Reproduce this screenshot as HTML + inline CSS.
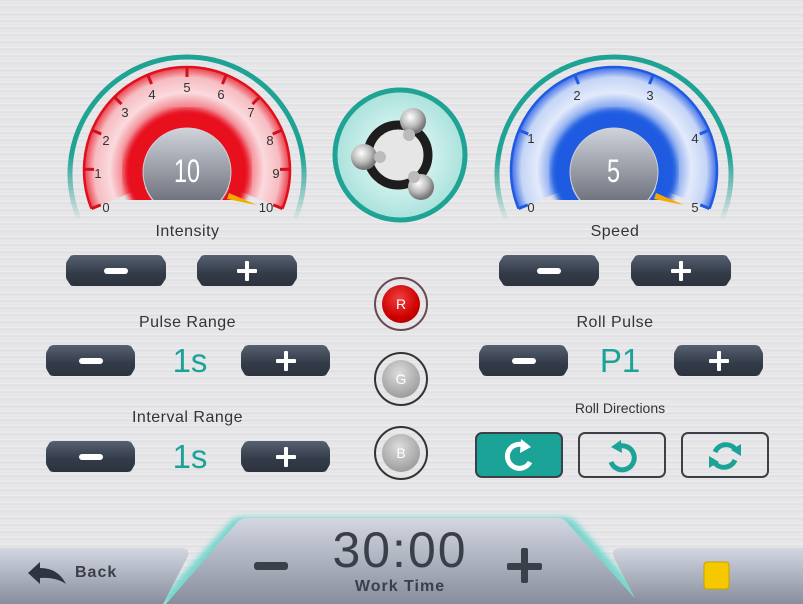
<!DOCTYPE html>
<html><head><meta charset="utf-8">
<style>
*{margin:0;padding:0;box-sizing:border-box}
body{width:803px;height:604px;overflow:hidden;position:relative;font-family:"Liberation Sans",sans-serif;
background:repeating-linear-gradient(180deg,#e9e9eb 0px,#dcdcde 1px,#ececee 2px,#e2e2e4 4px,#f0f0f2 5px,#dedee0 7px);}
.btn{position:absolute;height:31px;border-radius:8px/10px;background:linear-gradient(#566070,#333b48 60%,#2c333e);
box-shadow:0 1px 2px rgba(0,0,0,.4);clip-path:polygon(0 25%,5% 0,95% 0,100% 25%,100% 75%,95% 100%,5% 100%,0 75%);}
.btn .m{position:absolute;left:50%;top:50%;width:24px;height:6px;margin:-3px 0 0 -12px;background:#fff;border-radius:3px}
.btn .p1{position:absolute;left:50%;top:50%;width:20px;height:4px;margin:-2px 0 0 -10px;background:#fff;border-radius:1px}
.btn .p2{position:absolute;left:50%;top:50%;width:4px;height:20px;margin:-10px 0 0 -2px;background:#fff;border-radius:1px}
.lbl{position:absolute;color:#333;font-size:16px;letter-spacing:.5px;text-align:center}
.val{position:absolute;color:#1aa396;font-size:33px;text-align:center}
.rgb{position:absolute;width:54px;height:54px;border-radius:50%;border:2px solid #4a3f44;}
.rgb div{position:absolute;left:6px;top:6px;width:38px;height:38px;border-radius:50%;color:#fff;font-size:14px;text-align:center;line-height:38px}
.dir{position:absolute;top:432px;width:88px;height:46px;border:2px solid #3c4048;border-radius:7px}
</style></head><body>

<svg width="803" height="604" style="position:absolute;left:0;top:0">
<defs>
<radialGradient id="rg" cx="187" cy="170" r="103" gradientUnits="userSpaceOnUse">
<stop offset="0.5" stop-color="#e8101c"/><stop offset="0.6" stop-color="#f27a84"/><stop offset="0.75" stop-color="#fadadd"/><stop offset="0.9" stop-color="#f6bcc1"/><stop offset="1" stop-color="#ea3a48"/></radialGradient>
<radialGradient id="bg" cx="614" cy="170" r="103" gradientUnits="userSpaceOnUse">
<stop offset="0.5" stop-color="#1e5be0"/><stop offset="0.6" stop-color="#7da0ee"/><stop offset="0.75" stop-color="#e3eafb"/><stop offset="0.9" stop-color="#c5d5f6"/><stop offset="1" stop-color="#3a6ae8"/></radialGradient>
<linearGradient id="tl" x1="0" y1="57" x2="0" y2="225" gradientUnits="userSpaceOnUse"><stop offset="0.6" stop-color="#1fa394"/><stop offset="1" stop-color="#1fa394" stop-opacity="0"/></linearGradient>
<linearGradient id="hub" x1="0" y1="0" x2="0" y2="1"><stop offset="0" stop-color="#d0d3da"/><stop offset="1" stop-color="#5a606c"/></linearGradient>
<radialGradient id="logo" cx="0.5" cy="0.5" r="0.5"><stop offset="0.3" stop-color="#dff5f3"/><stop offset="1" stop-color="#a9e2dc"/></radialGradient>
<radialGradient id="ball" cx="0.4" cy="0.35" r="0.6"><stop offset="0" stop-color="#fff"/><stop offset="0.6" stop-color="#bbb"/><stop offset="1" stop-color="#777"/></radialGradient>
<linearGradient id="bot" x1="0" y1="0" x2="0" y2="1"><stop offset="0" stop-color="#d3d7e2"/><stop offset="1" stop-color="#878d9c"/></linearGradient>
<filter id="bl"><feGaussianBlur stdDeviation="3"/></filter>
<clipPath id="c1"><rect x="0" y="0" width="803" height="200"/></clipPath>
</defs>

<!-- left gauge -->
<path d="M79,222 A117 117 0 1 1 295,222" fill="none" stroke="url(#tl)" stroke-width="5" transform="translate(0,-3)"/>
<path d="M187,170 L91.5,208.6 A103 103 0 1 1 282.5,208.6 Z" fill="url(#rg)"/>
<path d="M91.5,208.6 A103 103 0 1 1 282.5,208.6" fill="none" stroke="#e0101c" stroke-width="2.5"/>
<g stroke="#d0101c" stroke-width="3">
<line x1="187" y1="77" x2="187" y2="67" transform="rotate(-112 187 170)"/><line x1="187" y1="77" x2="187" y2="67" transform="rotate(-89.6 187 170)"/><line x1="187" y1="77" x2="187" y2="67" transform="rotate(-67.2 187 170)"/><line x1="187" y1="77" x2="187" y2="67" transform="rotate(-44.8 187 170)"/><line x1="187" y1="77" x2="187" y2="67" transform="rotate(-22.4 187 170)"/><line x1="187" y1="77" x2="187" y2="67"/><line x1="187" y1="77" x2="187" y2="67" transform="rotate(22.4 187 170)"/><line x1="187" y1="77" x2="187" y2="67" transform="rotate(44.8 187 170)"/><line x1="187" y1="77" x2="187" y2="67" transform="rotate(67.2 187 170)"/><line x1="187" y1="77" x2="187" y2="67" transform="rotate(89.6 187 170)"/><line x1="187" y1="77" x2="187" y2="67" transform="rotate(112 187 170)"/>
</g>
<g font-size="13" fill="#333" text-anchor="middle" font-family="Liberation Sans">
<text x="106" y="212">0</text><text x="98" y="178">1</text><text x="106" y="145">2</text><text x="125" y="117">3</text><text x="152" y="99">4</text><text x="187" y="92">5</text><text x="221" y="99">6</text><text x="251" y="117">7</text><text x="270" y="145">8</text><text x="276" y="178">9</text><text x="266" y="212">10</text></g>
<circle cx="187" cy="172" r="54" fill="none" stroke="#e8101c" stroke-width="18" filter="url(#bl)" clip-path="url(#c1)"/>
<circle cx="187" cy="172" r="51" fill="none" stroke="#e8101c" stroke-width="12" clip-path="url(#c1)"/>
<circle cx="187" cy="172" r="44" fill="url(#hub)" stroke="#cfd2d8" stroke-width="1" clip-path="url(#c1)"/>
<path d="M229,193 L257,205 L227,199 Z" fill="#f5a800"/>
<text x="174" y="182" font-size="32" fill="#fff" font-family="Liberation Sans" textLength="26" lengthAdjust="spacingAndGlyphs">10</text>

<!-- right gauge -->
<path d="M506,222 A117 117 0 1 1 722,222" fill="none" stroke="url(#tl)" stroke-width="5" transform="translate(0,-3)"/>
<path d="M614,170 L518.5,208.6 A103 103 0 1 1 709.5,208.6 Z" fill="url(#bg)"/>
<path d="M518.5,208.6 A103 103 0 1 1 709.5,208.6" fill="none" stroke="#1e5be0" stroke-width="2.5"/>
<g stroke="#1e5be0" stroke-width="3">
<line x1="614" y1="77" x2="614" y2="67" transform="rotate(-112 614 170)"/><line x1="614" y1="77" x2="614" y2="67" transform="rotate(-67.2 614 170)"/><line x1="614" y1="77" x2="614" y2="67" transform="rotate(-22.4 614 170)"/><line x1="614" y1="77" x2="614" y2="67" transform="rotate(22.4 614 170)"/><line x1="614" y1="77" x2="614" y2="67" transform="rotate(67.2 614 170)"/><line x1="614" y1="77" x2="614" y2="67" transform="rotate(112 614 170)"/>
</g>
<g font-size="13" fill="#333" text-anchor="middle" font-family="Liberation Sans">
<text x="531" y="212">0</text><text x="531" y="143">1</text><text x="577" y="100">2</text><text x="650" y="100">3</text><text x="695" y="143">4</text><text x="695" y="212">5</text></g>
<circle cx="614" cy="172" r="54" fill="none" stroke="#1e5be0" stroke-width="18" filter="url(#bl)" clip-path="url(#c1)"/>
<circle cx="614" cy="172" r="51" fill="none" stroke="#1e5be0" stroke-width="12" clip-path="url(#c1)"/>
<circle cx="614" cy="172" r="44" fill="url(#hub)" stroke="#cfd2d8" stroke-width="1" clip-path="url(#c1)"/>
<path d="M656,193 L684,205 L654,199 Z" fill="#f5a800"/>
<text x="607" y="182" font-size="32" fill="#fff" font-family="Liberation Sans" textLength="13" lengthAdjust="spacingAndGlyphs">5</text>

<!-- logo -->
<circle cx="400" cy="155" r="65" fill="url(#logo)" stroke="#1fa394" stroke-width="5"/>
<circle cx="398" cy="155" r="30" fill="#e6e6e6" stroke="#1d1d1d" stroke-width="9"/>
<circle cx="413" cy="121" r="13" fill="url(#ball)"/><circle cx="409" cy="135" r="6" fill="#bbb"/>
<circle cx="364" cy="157" r="13" fill="url(#ball)"/><circle cx="380" cy="157" r="6" fill="#bbb"/>
<circle cx="421" cy="187" r="13" fill="url(#ball)"/><circle cx="414" cy="177" r="6" fill="#bbb"/>

<!-- bottom -->
<path d="M156,604 L230,522 Q234,517 242,517 L564,517 Q572,517 576,522 L650,604 Z" fill="#5fd3c7" filter="url(#bl)" opacity="0.8"/>
<path d="M166,604 L234,526 Q239,518 248,518 L556,518 Q565,518 570,526 L640,604 Z" fill="url(#bot)"/>
<path d="M0,548 L180,548 Q192,548 187,558 L163,604 L0,604 Z" fill="url(#bot)"/>
<path d="M803,548 L622,548 Q610,548 614,558 L638,604 L803,604 Z" fill="url(#bot)"/>
<path d="M28,573 L40,562 L40,568 Q58,568 66,584 Q56,577 40,578 L40,584 Z" fill="#2f3540"/>
<rect x="704" y="562" width="25" height="27" rx="3" fill="#f5c800" stroke="#c9a000"/>
<rect x="254" y="562" width="34" height="8" rx="3" fill="#3a3f4a"/>
<rect x="507" y="563" width="35" height="7" rx="2" fill="#3a3f4a"/><rect x="521" y="548" width="7" height="35" rx="2" fill="#3a3f4a"/>
</svg>

<div style="position:absolute;left:75px;top:564px;font-size:16px;font-weight:bold;color:#3a3f4a;letter-spacing:1px">Back</div>
<div style="position:absolute;left:300px;top:521px;width:200px;text-align:center;font-size:50px;color:#3a3f4a;letter-spacing:2px">30:00</div>
<div style="position:absolute;left:300px;top:578px;width:200px;text-align:center;font-size:16px;font-weight:bold;color:#3a3f4a;letter-spacing:1px">Work Time</div>

<div class="lbl" style="left:100px;top:223px;width:175px">Intensity</div>
<div class="lbl" style="left:530px;top:223px;width:170px">Speed</div>
<div class="btn" style="left:66px;top:255px;width:100px"><div class="m"></div></div>
<div class="btn" style="left:197px;top:255px;width:100px"><div class="p1"></div><div class="p2"></div></div>
<div class="btn" style="left:499px;top:255px;width:100px"><div class="m"></div></div>
<div class="btn" style="left:631px;top:255px;width:100px"><div class="p1"></div><div class="p2"></div></div>

<div class="lbl" style="left:100px;top:314px;width:175px">Pulse Range</div>
<div class="btn" style="left:46px;top:345px;width:89px"><div class="m"></div></div>
<div class="val" style="left:150px;top:342px;width:80px">1s</div>
<div class="btn" style="left:241px;top:345px;width:89px"><div class="p1"></div><div class="p2"></div></div>
<div class="lbl" style="left:100px;top:409px;width:175px">Interval Range</div>
<div class="btn" style="left:46px;top:441px;width:89px"><div class="m"></div></div>
<div class="val" style="left:150px;top:438px;width:80px">1s</div>
<div class="btn" style="left:241px;top:441px;width:89px"><div class="p1"></div><div class="p2"></div></div>

<div class="lbl" style="left:530px;top:314px;width:170px">Roll Pulse</div>
<div class="btn" style="left:479px;top:345px;width:89px"><div class="m"></div></div>
<div class="val" style="left:580px;top:342px;width:80px">P1</div>
<div class="btn" style="left:674px;top:345px;width:89px"><div class="p1"></div><div class="p2"></div></div>
<div class="lbl" style="left:530px;top:400px;width:180px;font-size:14px;letter-spacing:0">Roll Directions</div>

<div class="rgb" style="left:374px;top:277px;border-color:#6a4a52"><div style="background:radial-gradient(circle at 45% 35%,#f04040,#c00 60%,#900)">R</div></div>
<div class="rgb" style="left:374px;top:352px;border-color:#333"><div style="background:radial-gradient(circle at 45% 35%,#ddd,#aaa 60%,#888)">G</div></div>
<div class="rgb" style="left:374px;top:426px;border-color:#333"><div style="background:radial-gradient(circle at 45% 35%,#ddd,#aaa 60%,#888)">B</div></div>

<div class="dir" style="left:475px;background:#1aa396"><svg width="84" height="42"><path d="M50,13 A12 12 0 1 0 53,28" fill="none" stroke="#fff" stroke-width="5"/><path d="M44,5 L54,13 L43,19 Z" fill="#fff"/></svg></div>
<div class="dir" style="left:578px"><svg width="84" height="42"><path d="M37,13 A12 12 0 1 1 31,28" fill="none" stroke="#1aa396" stroke-width="5"/><path d="M41,6 L31,13 L42,19 Z" fill="#1aa396"/></svg></div>
<div class="dir" style="left:681px"><svg width="84" height="42"><path d="M32,18 A12 12 0 0 1 53,16" fill="none" stroke="#1aa396" stroke-width="5"/><path d="M52,26 A12 12 0 0 1 31,28" fill="none" stroke="#1aa396" stroke-width="5"/><path d="M48,16 L58,10 L58,22 Z" fill="#1aa396"/><path d="M36,28 L26,34 L26,22 Z" fill="#1aa396"/></svg></div>
</body></html>
